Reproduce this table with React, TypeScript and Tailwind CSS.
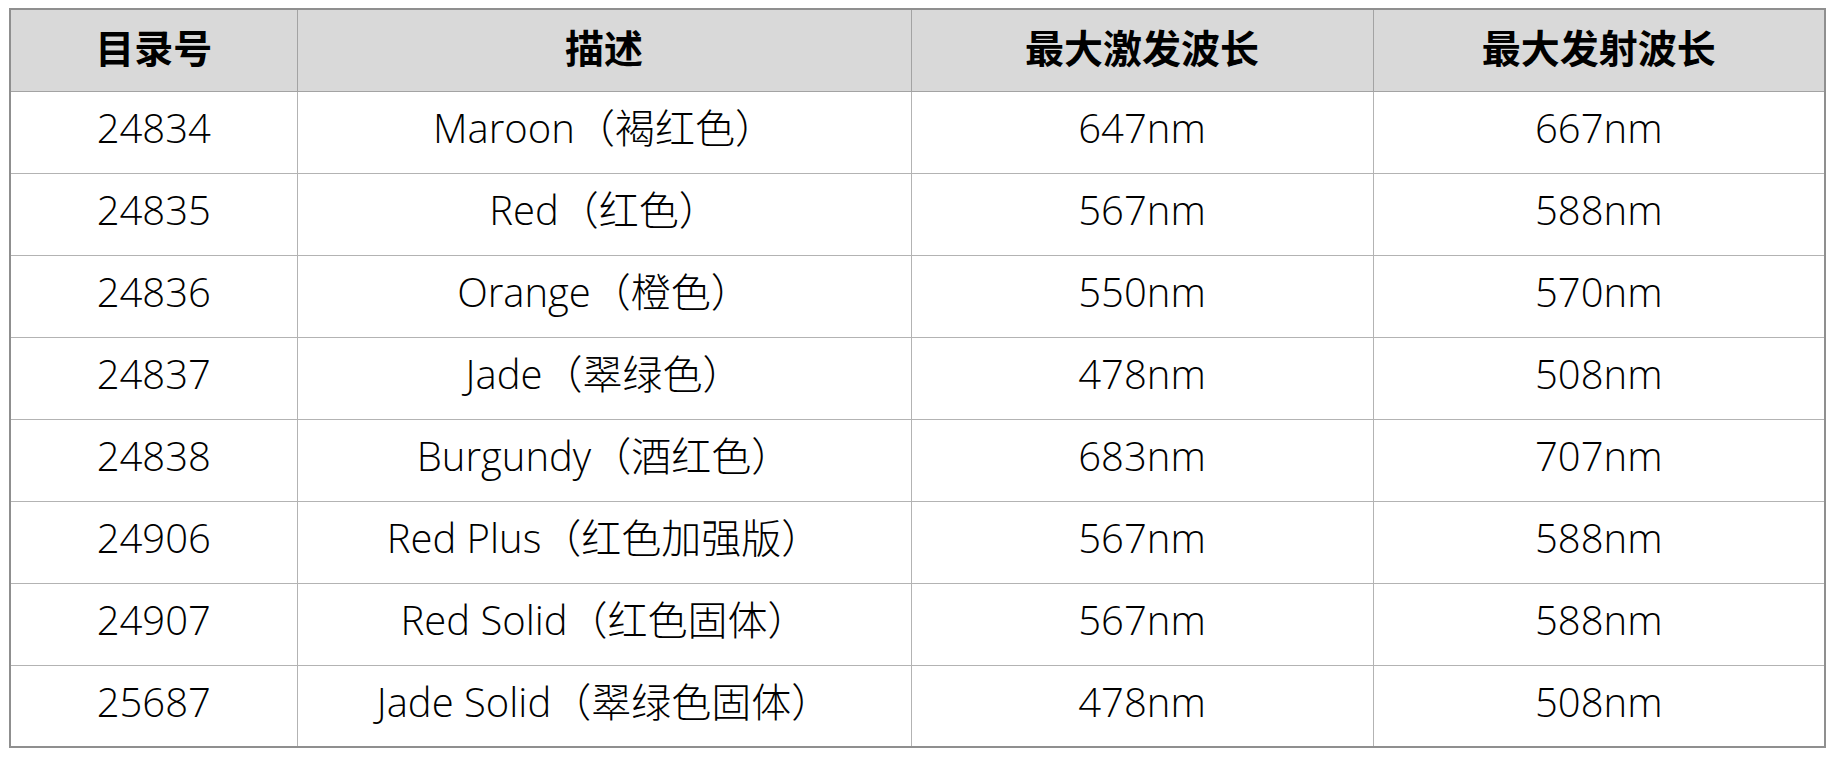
const rows = [
  ["24834", "Maroon（褐红色）", "647nm", "667nm"],
  ["24835", "Red（红色）", "567nm", "588nm"],
  ["24836", "Orange（橙色）", "550nm", "570nm"],
  ["24837", "Jade（翠绿色）", "478nm", "508nm"],
  ["24838", "Burgundy（酒红色）", "683nm", "707nm"],
  ["24906", "Red Plus（红色加强版）", "567nm", "588nm"],
  ["24907", "Red Solid（红色固体）", "567nm", "588nm"],
  ["25687", "Jade Solid（翠绿色固体）", "478nm", "508nm"],
];

const headers = ["目录号", "描述", "最大激发波长", "最大发射波长"];

export default function App() {
  return (
    <div
      className="w-[1833px] h-[757px] bg-white pt-[8px] pl-[9px]"
      style={{ fontFamily: '"Noto Sans CJK SC", "Noto Sans", sans-serif' }}
    >
      <table className="table-fixed border-collapse w-[1815px] border-2 border-[#8f8f8f] text-black">
        <colgroup>
          <col className="w-[287px]" />
          <col className="w-[614px]" />
          <col className="w-[462px]" />
          <col className="w-[452px]" />
        </colgroup>
        <thead>
          <tr className="bg-[#d9d9d9]">
            {headers.map((h) => (
              <th
                key={h}
                className="h-[82px] border border-[#a3a3a3] text-[39px] font-bold text-center align-middle p-0 pb-[8px] leading-none"
              >
                {h}
              </th>
            ))}
          </tr>
        </thead>
        <tbody>
          {rows.map((r) => (
            <tr key={r[0]}>
              {r.map((c, i) => (
                <td
                  key={i}
                  className="h-[82px] border border-[#b3b3b3] text-[40px] font-light text-center align-middle p-0 pb-[8px] leading-none"
                  style={{ fontFamily: '"Open Sans", "Noto Sans CJK SC", sans-serif' }}
                >
                  {c}
                </td>
              ))}
            </tr>
          ))}
        </tbody>
      </table>
    </div>
  );
}
